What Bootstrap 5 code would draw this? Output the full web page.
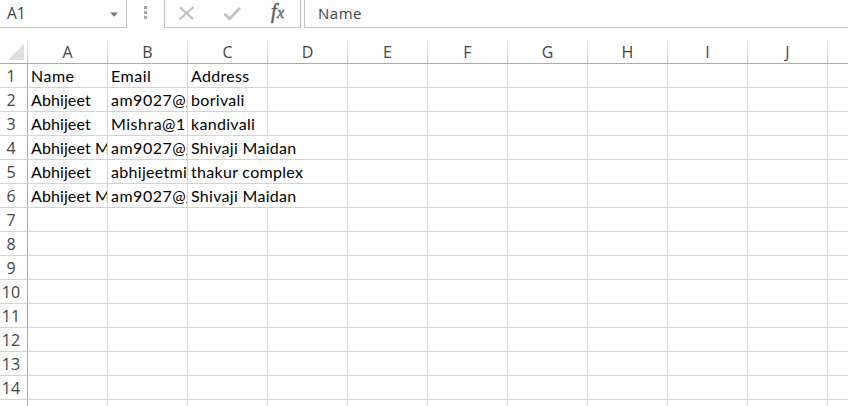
<!DOCTYPE html>
<html lang="en">
<head>
<meta charset="utf-8">
<meta name="viewport" content="width=device-width, initial-scale=1">
<title>Spreadsheet</title>
<link href="https://cdn.jsdelivr.net/npm/bootstrap@5.3.0/dist/css/bootstrap.min.css" rel="stylesheet">
<style>
  body { width: 848px; height: 406px; font-family: "Open Sans", "Noto Sans", sans-serif; color: #444; font-size: 15px; line-height: 1; }
  .formula-bar { height: 28px; }
  .bar-box { background: #fdfdfd; border-bottom: 1px solid #c3c3c3; }
  .name-box { width: 127px; border-right: 1px solid #c3c3c3; padding: 1px 8px 0 7px; font-size: 15.5px; }
  .grip { width: 37px; padding-top: 6px; }
  .tools { width: 137px; margin-right: 3px; border-left: 1px solid #c3c3c3; border-right: 1px solid #c3c3c3; }
  .formula { border-left: 1px solid #c3c3c3; padding: 0 0 1px 13px; letter-spacing: .5px; }
  .sheet { margin-top: 12px; }
  .heads { height: 24px; border-bottom: 1px solid #ababab; }
  .corner-box, .col-head, .row-head, .cell { flex: none; }
  .corner-box { width: 28px; padding: 4px 3px 0 8px; border-right: 1px solid; border-image: linear-gradient(#eee, #c6c6c6) 1; }
  .col-head { width: 80px; font-size: 16px; padding: 1px 0 0; border-right: 1px solid; border-image: linear-gradient(#eee, #c6c6c6) 1; }
  .line { height: 24px; }
  .row-head { width: 28px; font-size: 16px; padding: 0 5px 0 0; border-right: 1px solid #ababab; border-bottom: 1px solid #d4d4d4; }
  .cell { width: 80px; padding: 1px 0 0 3px; border-right: 1px solid #d4d4d4; border-bottom: 1px solid #d4d4d4; font-family: Lato, "Open Sans", sans-serif; font-size: 16px; color: #000; line-height: 21px; letter-spacing: .3px; }
  .cell.first { letter-spacing: .1px; }
  .cell.title { letter-spacing: .5px; }
  .cell.mail { letter-spacing: .5px; }
  .cell.spill { width: 160px; }
  .cell.last { width: auto; flex: 1 1 0; border-right: 0; }
</style>
<script src="https://cdn.jsdelivr.net/npm/bootstrap@5.3.0/dist/js/bootstrap.bundle.min.js"></script>
</head>
<body class="bg-white overflow-hidden m-0">
<header class="formula-bar d-flex">
  <div class="name-box bar-box d-flex align-items-center justify-content-between"><span>A1</span>
    <svg width="8" height="5" viewBox="0 0 8 5"><path d="M0 .5h8L4 4.8z" fill="#777"/></svg>
  </div>
  <div class="grip d-flex justify-content-center">
    <svg width="3" height="13" viewBox="0 0 3 13" fill="#a6a6a6"><path d="M0 0h3v3H0zM0 5h3v3H0zM0 10h3v3H0z"/></svg>
  </div>
  <div class="tools bar-box">
    <svg width="135" height="27" viewBox="0 0 135 27" fill="none">
      <path d="M15.2 7.5 28 19M28.5 7 14.6 19.3" stroke="#bdbdbd" stroke-width="1.9"/>
      <path d="m59.5 13.7 5 5L75 8" stroke="#c3c3c3" stroke-width="3"/>
      <text x="106" y="18" font-family="Liberation Serif, serif" font-style="italic" font-size="20" fill="#555" stroke="#666" stroke-width=".5">f</text>
      <text x="112" y="18" font-family="Liberation Serif, serif" font-style="italic" font-size="16" fill="#666" stroke="#777" stroke-width=".5">x</text>
    </svg>
  </div>
  <div class="formula bar-box flex-grow-1 d-flex align-items-center">Name</div>
</header>
<main class="sheet">
  <div class="heads d-flex" id="heads">
    <div class="corner-box"><svg class="d-block" width="16" height="16" viewBox="0 0 16 16"><path d="M16 0v16H0z" fill="#dfdfdf"/></svg></div>
  </div>
  <div id="lines"></div>
</main>
<script>
  const data = [
    ["Name", "Email", "Address"],
    ["Abhijeet", "am9027@g", "borivali"],
    ["Abhijeet", "Mishra@1", "kandivali"],
    ["Abhijeet M", "am9027@g", "Shivaji Maidan"],
    ["Abhijeet", "abhijeetmi", "thakur complex"],
    ["Abhijeet M", "am9027@g", "Shivaji Maidan"]
  ];
  document.getElementById("heads").insertAdjacentHTML("beforeend",
    [..."ABCDEFGHIJ"].map(c => `<div class="col-head d-flex align-items-center justify-content-center">${c}</div>`).join(""));
  let html = "";
  for (let r = 0; r < 15; r++) {
    html += `<div class="line d-flex"><div class="row-head d-flex align-items-center justify-content-center">${r < 14 ? r + 1 : ""}</div>`;
    const wide = r > 2 && r < 6;
    for (let c = 0; c < 11; c++) {
      if (wide && c === 3) continue;
      const text = (data[r] || [])[c] || "";
      const kind = (wide && c === 2 ? " spill" : "") + (c === 0 ? (r ? " first" : " title") : "") + (c === 1 && r !== 4 ? " mail" : "") + (c === 10 ? " last" : "");
      html += `<div class="cell overflow-hidden text-nowrap${kind}">${text}</div>`;
    }
    html += "</div>";
  }
  document.getElementById("lines").innerHTML = html;
</script>
</body>
</html>
